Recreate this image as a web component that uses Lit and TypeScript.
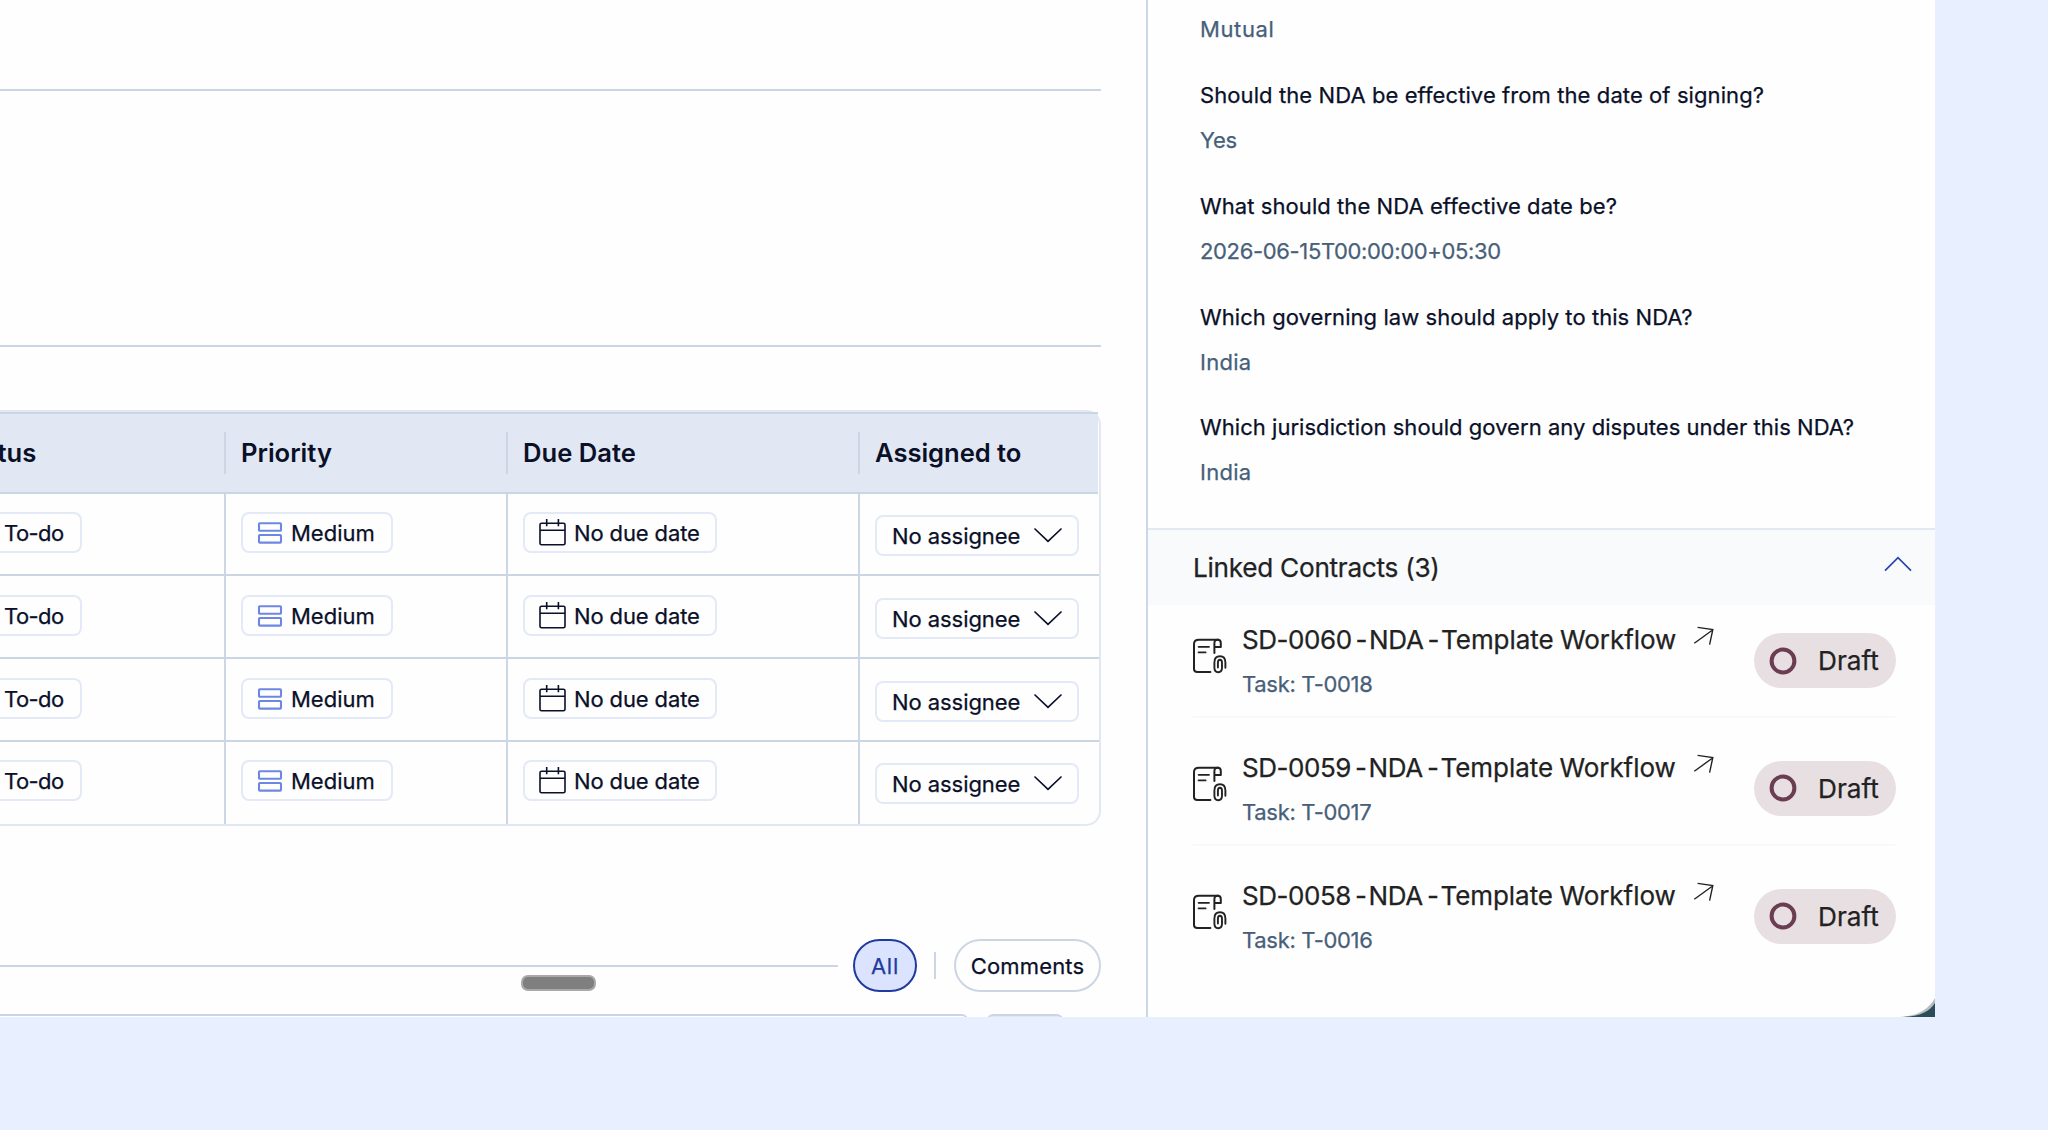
import { LitElement, html, svg, css } from "lit";
import { customElement } from "lit/decorators.js";

interface Qa {
  q?: string;
  a: string;
  qs?: string;
  as: string;
}

const answers: Qa[] = [
  { a: "Mutual", as: "0.6px" },
  { q: "Should the NDA be effective from the date of signing?", qs: "0.09px", a: "Yes", as: "-0.3px" },
  { q: "What should the NDA effective date be?", qs: "0.07px", a: "2026-06-15T00:00:00+05:30", as: "-0.35px" },
  { q: "Which governing law should apply to this NDA?", qs: "0.06px", a: "India", as: "0.25px" },
  { q: "Which jurisdiction should govern any disputes under this NDA?", qs: "0.04px", a: "India", as: "0.25px" },
];

const contracts = [
  { id: "SD-0060", task: "T-0018" },
  { id: "SD-0059", task: "T-0017" },
  { id: "SD-0058", task: "T-0016" },
];

const priorityIcon = svg`<svg class="i-priority" width="24" height="22" viewBox="0 0 24 22" fill="none" stroke="#6c88e2" stroke-width="2.1">
  <rect x="1" y="1.2" width="22" height="7.6" rx="0.8"/><rect x="1" y="13" width="22" height="7.6" rx="0.8"/></svg>`;

const calendarIcon = svg`<svg width="27" height="27" viewBox="0 0 27 27" fill="none" stroke="#0a1028" stroke-width="1.6">
  <rect x="1" y="4.2" width="25" height="21.6" rx="1.6"/><path d="M1 11.2H26M7.7 0V7.2M19.4 0V7.2"/></svg>`;

const downIcon = svg`<svg width="28" height="15" viewBox="0 0 28 15" fill="none" stroke="#0a1028" stroke-width="1.7" stroke-linecap="round">
  <path d="M1 1L14 13.4L27 1"/></svg>`;

const upIcon = svg`<svg width="28" height="16" viewBox="0 0 28 16" fill="none" stroke="#2a45ae" stroke-width="1.7">
  <path d="M1 14.6L14 1.6L27 14.6"/></svg>`;

const arrowIcon = svg`<svg class="i-arrow" width="22" height="20" viewBox="0 0 22 20" fill="none" stroke="#222" stroke-width="1.4">
  <path d="M1.3 17.2L19.6 4M4.6 1.4L19.8 3.6L16.6 18.6"/></svg>`;

const contractIcon = svg`<svg width="34" height="36" viewBox="0 0 34 36" fill="none" stroke="#222" stroke-width="2" stroke-linecap="round" stroke-linejoin="round">
  <path d="M25.5 1.8H6C3 1.8 1 3 1 6V31C1 33 2.2 34 4.4 34H17.4"/>
  <path d="M21.4 15V5C21.4 3 22.6 1.8 24.6 1.8C27 1.8 27.8 3 27.8 5V9H21.6"/>
  <path d="M5.6 8.8H16M5.6 14.4H12.6" stroke-width="1.8"/>
  <path d="M32.4 29.8V24.6C32.4 20.4 30.4 18.2 27 18.2C23.4 18.2 21.4 20.4 21.4 24.4V29.6C21.4 32.4 22.8 34.2 25.2 34.2C27.8 34.2 29 32.4 29 29.8V25C29 23 28.4 21.8 26.9 21.8C25.4 21.8 24.9 23 24.9 24.8V29.6" stroke-width="1.9"/></svg>`;

const ringIcon = svg`<svg width="28" height="28" viewBox="0 0 28 28" fill="none"><circle cx="14" cy="14" r="11.4" stroke="#6b3d50" stroke-width="4"/></svg>`;

const todoIcon = svg`<svg width="24" height="24" viewBox="0 0 24 24" fill="none" stroke="#0a1028" stroke-width="1.6"><circle cx="12" cy="12" r="10"/></svg>`;

@customElement("app-root")
export class AppRoot extends LitElement {
  static styles = css`
    :host {
      display: block;
      width: 2048px;
      height: 1130px;
      background: #e8effe;
      font-family: Inter, "Liberation Sans", sans-serif;
      font-size: 22px;
      color: #0a1028;
      overflow: hidden;
      -webkit-text-stroke: 0.25px currentColor;
    }
    * { box-sizing: border-box; }
    svg { display: block; flex: none; overflow: visible; }
    .window {
      position: relative;
      display: flex;
      width: 1935px;
      height: 1017px;
      background: #fefefe;
      overflow: hidden;
    }
    .main {
      width: 1146px;
      flex: none;
      display: flex;
      flex-direction: column;
      overflow: hidden;
      padding-right: 45px;
    }
    .section { flex: none; border-bottom: 2px solid #ccd6e3; }
    .s1 { height: 91px; }
    .s2 { height: 256px; }
    .table {
      flex: none;
      margin: 63px 0 0 -62px;
      height: 416px;
      border: 2px solid #e2e8f2;
      border-radius: 15px;
    }
    .row {
      display: grid;
      grid-template-columns: 286px 282px 352px 1fr;
      height: 83px;
      border-bottom: 2px solid #cbd6e3;
    }
    .row:nth-child(2) { height: 82px; }
    .row:last-child { border-bottom: 0; height: 82px; }
    .head {
      height: 82px;
      align-items: center;
      background: #e2e8f3;
      border-top: 2px solid #cbd6e3;
      font-weight: 600;
      font-size: 25.6px;
      margin-right: 1px;
      -webkit-text-stroke: 0;
    }
    .head div { height: 42px; line-height: 41px; padding-left: 15px; border-right: 2px solid #cdd6e3; }
    .head div:first-child { padding-left: 17px; }
    .head div:last-child { border: 0; letter-spacing: -0.04px; }
    .cell { padding: 18px 0 0 15px; border-right: 2px solid #ccd7e4; }
    .row:nth-child(n+3) .cell { padding-top: 19px; }
    .row:last-child .cell { padding-top: 18px; }
    .row .cell:last-child { border: 0; padding-top: 21px; }
    .row:nth-child(n+3) .cell:last-child { padding-top: 22px; }
    .row:last-child .cell:last-child { padding-top: 21px; }
    .chip {
      display: inline-flex;
      align-items: center;
      height: 41px;
      border: 2px solid #e3e9f6;
      border-radius: 8px;
    }
    .todo { width: 127px; padding-left: 15px; gap: 8px; letter-spacing: -0.57px; }
    .med { width: 152px; padding-left: 15px; gap: 9px; }
    .due { width: 194px; padding-left: 14px; gap: 8px; letter-spacing: -0.12px; }
    .due svg { margin-top: -1px; }
    .who { width: 204px; padding-left: 15px; gap: 14px; letter-spacing: -0.06px; }
    .activity { display: flex; align-items: center; margin-top: 113px; height: 53px; flex: none; }
    .rule { width: 838px; height: 2px; background: #ccd6e3; margin-right: 15px; }
    .pill {
      height: 53px;
      border: 2px solid #ccd6e3;
      border-radius: 27px;
      display: flex;
      align-items: center;
      justify-content: center;
    }
    .all { width: 64px; background: #dbe3ff; border-color: #1f3b9f; color: #1f3b9f; letter-spacing: 0.8px; }
    .sep { width: 2px; height: 27px; background: #ccd6e3; margin: 0 18px 0 17px; }
    .comments { width: 147px; letter-spacing: 0.15px; }
    .composer { display: flex; gap: 19px; margin: 22px 0 0 -20px; height: 40px; flex: none; }
    .input { width: 988px; border: 2px solid #ccd6e3; border-radius: 6px; }
    .send { width: 76px; border: 2px solid #ccd6e3; border-radius: 6px; background: #e2e8f0; }
    .handle {
      position: absolute;
      left: 521px;
      top: 975px;
      width: 75px;
      height: 16px;
      border: 2px solid #a9a9a9;
      border-radius: 7px;
      background: #7f7f7f;
    }
    .side { flex: 1; border-left: 2px solid #ccd8e8; display: flex; flex-direction: column; }
    .qas {
      height: 528px;
      flex: none;
      padding: 13px 0 0 52px;
      display: flex;
      flex-direction: column;
      gap: 33px;
    }
    .qa { display: flex; flex-direction: column; gap: 12px; line-height: 33px; white-space: nowrap; }
    .qa:last-child { margin-top: -1px; }
    .a { color: #475f79; }
    .linked {
      height: 77px;
      flex: none;
      border-top: 2px solid #e2e9f2;
      background: #f8fafc;
      display: flex;
      align-items: center;
      justify-content: space-between;
      padding: 0 23px 1px 45px;
      font-size: 26.2px;
      letter-spacing: -0.28px;
      color: #222;
    }
    .linked svg { margin-top: -7px; }
    .list { display: flex; flex-direction: column; gap: 14.8px; padding: 0 40px 0 45px; }
    .item { height: 113px; flex: none; display: flex; border-bottom: 2px solid #f8f9fb; white-space: nowrap; }
    .item:last-child { border-color: transparent; }
    .item > svg { margin-top: 33px; }
    .info { flex: 1; padding: 17px 0 0 15px; display: flex; flex-direction: column; gap: 11.3px; }
    .title { display: flex; line-height: 36px; font-size: 26px; color: #222; letter-spacing: -0.05px; word-spacing: -0.8px; }
    .id { letter-spacing: -0.45px; }
    .dash { letter-spacing: -2.5px; white-space: pre; }
    .party { letter-spacing: -0.3px; }
    .i-arrow { margin: 4px 0 0 17px; }
    .task { line-height: 30px; color: #475f79; letter-spacing: -0.3px; }
    .status {
      margin: 28px -1px 0 0;
      width: 142px;
      height: 55px;
      border-radius: 28px;
      background: #e8dfe2;
      display: flex;
      align-items: center;
      padding-left: 15px;
      gap: 21px;
      font-size: 26.2px;
      color: #222;
    }
    .corner { position: absolute; right: 0; bottom: 0; }
  `;

  private renderRow() {
    return html`<div class="row">
      <div class="cell"><span class="chip todo">${todoIcon}To-do</span></div>
      <div class="cell"><span class="chip med">${priorityIcon}Medium</span></div>
      <div class="cell"><span class="chip due">${calendarIcon}No due date</span></div>
      <div class="cell"><span class="chip who">No assignee${downIcon}</span></div>
    </div>`;
  }

  render() {
    return html`<div class="window">
      <div class="main">
        <div class="section s1"></div>
        <div class="section s2"></div>
        <div class="table">
          <div class="row head">
            <div>Status</div><div>Priority</div><div>Due Date</div><div>Assigned to</div>
          </div>
          ${[0, 1, 2, 3].map(() => this.renderRow())}
        </div>
        <div class="activity">
          <div class="rule"></div>
          <div class="pill all">All</div>
          <div class="sep"></div>
          <div class="pill comments">Comments</div>
        </div>
        <div class="composer"><div class="input"></div><div class="send"></div></div>
      </div>
      <div class="side">
        <div class="qas">
          ${answers.map((x) => html`<div class="qa">
            ${x.q ? html`<div style="letter-spacing:${x.qs}">${x.q}</div>` : ""}
            <div class="a" style="letter-spacing:${x.as}">${x.a}</div>
          </div>`)}
        </div>
        <div class="linked"><span>Linked Contracts (3)</span>${upIcon}</div>
        <div class="list">
          ${contracts.map((c) => html`<div class="item">
            ${contractIcon}
            <div class="info">
              <div class="title"><span><span class="id">${c.id}</span><span class="dash"> - </span><span class="party">NDA</span><span class="dash"> - </span>Template Workflow</span>${arrowIcon}</div>
              <div class="task">Task: ${c.task}</div>
            </div>
            <div class="status">${ringIcon}Draft</div>
          </div>`)}
        </div>
      </div>
      <div class="handle"></div>
      <svg class="corner" width="40" height="19" viewBox="0 0 40 19">
        <path d="M40 0V19H0C22 19 33 12 40 0Z" fill="#b9bcbc"/>
        <path d="M40 5V19H8C26 18.4 35 13 40 5Z" fill="#2b4c59"/>
      </svg>
    </div>`;
  }
}
